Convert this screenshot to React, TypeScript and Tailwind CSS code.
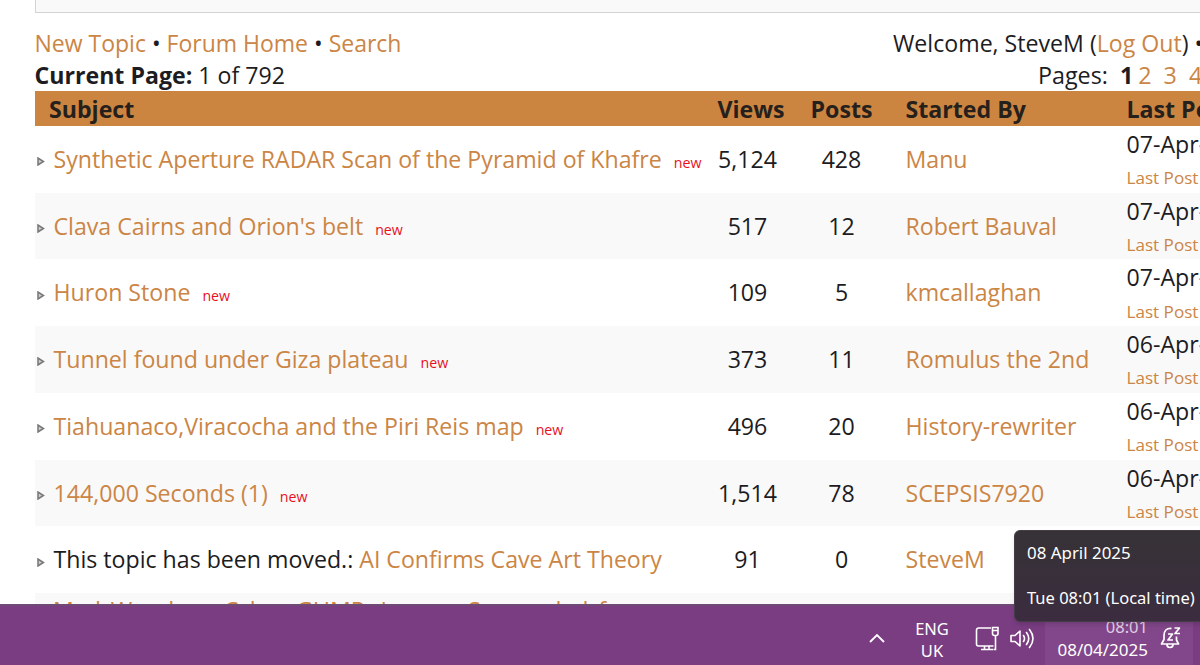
import type { ReactNode } from 'react';

interface Topic {
  title: string;
  prefix?: string;
  isNew?: boolean;
  views: string;
  posts: string;
  author: string;
  date: string;
}

const topics: Topic[] = [
  { title: 'Synthetic Aperture RADAR Scan of the Pyramid of Khafre', isNew: true, views: '5,124', posts: '428', author: 'Manu', date: '07-Apr-25' },
  { title: "Clava Cairns and Orion's belt", isNew: true, views: '517', posts: '12', author: 'Robert Bauval', date: '07-Apr-25' },
  { title: 'Huron Stone', isNew: true, views: '109', posts: '5', author: 'kmcallaghan', date: '07-Apr-25' },
  { title: 'Tunnel found under Giza plateau', isNew: true, views: '373', posts: '11', author: 'Romulus the 2nd', date: '06-Apr-25' },
  { title: 'Tiahuanaco,Viracocha and the Piri Reis map', isNew: true, views: '496', posts: '20', author: 'History-rewriter', date: '06-Apr-25' },
  { title: '144,000 Seconds (1)', isNew: true, views: '1,514', posts: '78', author: 'SCEPSIS7920', date: '06-Apr-25' },
  { title: 'AI Confirms Cave Art Theory', prefix: 'This topic has been moved.:', views: '91', posts: '0', author: 'SteveM', date: '' },
];

const columns = 'grid grid-cols-[679px_67px_121px_222px_200px]';

function Link({ children }: { children: ReactNode }) {
  return <a className="text-[#cb8545]">{children}</a>;
}

function TopicRow({ topic }: { topic: Topic }) {
  return (
    <div className={`${columns} h-[66.75px] grid-rows-[66.75px] items-center even:bg-[#f9f9f9]`}>
      <div className="flex items-center whitespace-nowrap">
        <svg className="mt-[5px] ml-[2px] mr-[9px] shrink-0" width="8" height="9" viewBox="0 0 8 9">
          <path d="M1 1v7l5.5-3.5z" fill="#ccc" stroke="#777" strokeWidth="1.5" />
        </svg>
        <span>
          {topic.prefix && <span>{topic.prefix} </span>}
          <Link>{topic.title}</Link>
          {topic.isNew && <span className="ml-[12px] text-[14.2px] text-[#e8101c]">new</span>}
        </span>
      </div>
      <div className="pl-px text-center">{topic.views}</div>
      <div className="pl-px text-center">{topic.posts}</div>
      <div className="whitespace-nowrap pl-[4px]">
        <Link>{topic.author}</Link>
      </div>
      {topic.date && (
        <div className="whitespace-nowrap pl-[3px] pt-[4px] leading-[33.3px]">
          <div>{topic.date}</div>
          <div className="text-[17.1px]"><Link>Last Post</Link></div>
        </div>
      )}
    </div>
  );
}

function Taskbar() {
  return (
    <div className="absolute inset-x-0 bottom-0 flex h-[61px] border-t-2 border-[#6f4a76] bg-[#7a3d82] pl-[868px] font-['Noto_Sans',sans-serif] text-[16.5px] leading-[22px] text-white">
      <svg className="mt-[24px] shrink-0" width="18" height="18" viewBox="0 0 18 18" fill="none" stroke="white" strokeWidth="1.8">
        <path d="M2 12l7-7 7 7" />
      </svg>
      <div className="ml-[27px] mt-[12px] w-[38px] text-center">
        <div>ENG</div>
        <div>UK</div>
      </div>
      <svg className="ml-[24px] mt-[20px] shrink-0" width="25" height="26" viewBox="0 0 25 26" fill="none" stroke="white" strokeWidth="1.6">
        <path d="M16 2H3.5A2 2 0 0 0 1.5 4v14a2 2 0 0 0 2 2H18.5M6 23.5h12M9.5 20v3.5M14 20v3.5M20.5 9.5v14h-2M17.5 1.5h5.5v6a2 2 0 0 1-2 2h-1.5a2 2 0 0 1-2-2zM17.5 4.5h5.5" />
      </svg>
      <svg className="ml-[9px] mt-[22px] shrink-0" width="26" height="21" viewBox="0 0 26 21" fill="none" stroke="white" strokeWidth="1.6" strokeLinecap="round" strokeLinejoin="round">
        <path d="M2 7.5h4l5-4.5v15l-5-4.5H2zM14.5 7.5q2 3 0 6M17.5 4.5q4.5 6 0 12M20.5 1.5q7 9 0 18" />
      </svg>
      <div className="ml-[10px] flex w-[148px] shrink-0 bg-[#82478a]">
        <div className="ml-[8px] mt-[10px] w-[95px] text-right">
          <div className="text-[#e2cfe5]">08:01</div>
          <div className="-ml-2 mt-px text-[17px]">08/04/2025</div>
        </div>
        <svg className="ml-[11px] mt-[20px] shrink-0" width="23" height="24" viewBox="0 0 23 24" fill="none" stroke="white" strokeWidth="1.7" strokeLinejoin="round">
          <path d="M12.5 2.5Q5 2 5 9.5v4L2.5 18h17l-2-4v-3.5M8 18.5q0 3 3 3t3-3M9 8h4.5L9 14h5M15.5 2h5L16 7.5h5" />
        </svg>
      </div>
    </div>
  );
}

export default function App() {
  return (
    <div className="relative h-[665px] w-[1200px] overflow-hidden bg-white font-['Open_Sans',sans-serif] text-[23.15px] text-[#1c1c22]">
      <div className="ml-[35px] h-[12.5px] border-b border-l border-[#d4d4d4] bg-[#f9f9f9]" />
      <div className="ml-[34.5px] w-[1300px]">
        <div className="mt-[14px] flex whitespace-nowrap leading-[32px]">
          <div className="w-[858.5px]">
            <div className="text-[23px]"><Link>New Topic</Link> • <Link>Forum Home</Link> • <Link>Search</Link></div>
            <div><b>Current Page:</b> 1 of 792</div>
          </div>
          <div>
            <div>Welcome, SteveM (<Link>Log Out</Link>) •</div>
            <div className="flex pl-[145px] text-[23.3px]">
              <span>Pages:</span>
              <b className="ml-[12px]">1</b>
              <span className="ml-[5px] flex gap-[12px]"><Link>2</Link><Link>3</Link><Link>4</Link></span>
            </div>
          </div>
        </div>
        <div className={`${columns} h-[35.3px] items-center whitespace-nowrap bg-[#cc8540] pt-px font-bold text-[#26201c]`}>
          <div className="pl-[14.5px]">Subject</div>
          <div className="pl-[4px]">Views</div>
          <div className="pl-px text-center">Posts</div>
          <div className="pl-[4px]">Started By</div>
          <div className="pl-[3px]">Last Post</div>
        </div>
        <div>
          {topics.map(topic => (
            <TopicRow key={topic.title} topic={topic} />
          ))}
          <div className="h-[66.75px] bg-[#f9f9f9] pl-[18.5px] pt-px leading-[33px] [word-spacing:3.8px]">
            <Link>Mad Wonders: Cyber GUMP, League Suspended for</Link>
          </div>
        </div>
      </div>
      <Taskbar />
      <div className="absolute left-[1014px] top-[530px] h-[92px] w-[200px] whitespace-nowrap rounded-[6px] border border-[#443c46] bg-linear-to-b from-[#363236] to-[#3b2c3f] pl-[12px] pt-[10.5px] font-['Noto_Sans',sans-serif] text-[16.5px] leading-[22px] text-white shadow-md">
        <div className="text-[16.9px]">08 April 2025</div>
        <div className="mt-[23px]">Tue 08:01 (Local time)</div>
      </div>
    </div>
  );
}
